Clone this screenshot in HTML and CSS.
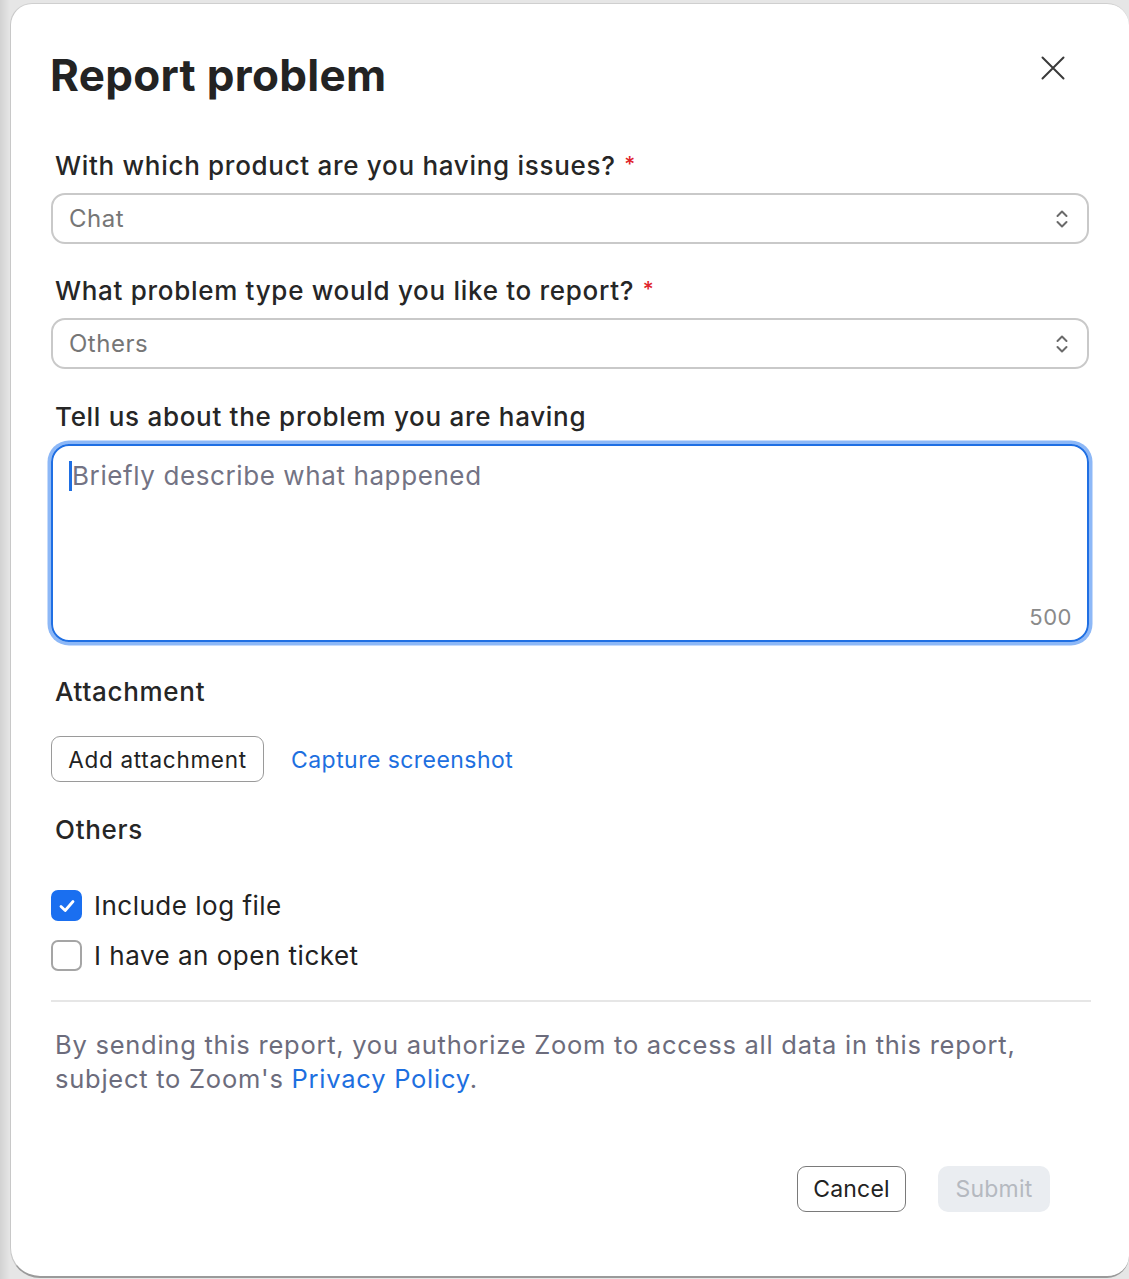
FILE: index.html
```html
<!DOCTYPE html>
<html>
<head>
<meta charset="utf-8">
<link rel="stylesheet" href="styles.css">
</head>
<body>
<div class="backdrop">
  <div class="dialog">
    <div class="header">
      <h1 class="title">Report problem</h1>
      <button class="close" aria-label="Close">
        <svg width="24" height="24" viewBox="0 0 24 24"><path d="M1.5 1.5 L22.5 22.5 M22.5 1.5 L1.5 22.5" stroke="#3a3a3a" stroke-width="2" stroke-linecap="round"/></svg>
      </button>
    </div>

    <div class="field">
      <div class="label">With which product are you having issues? <span class="req">*</span></div>
      <div class="select">
        <span class="select-value">Chat</span>
        <svg class="chev" width="14" height="24" viewBox="0 0 14 24"><path d="M2.5 9 L7 4.5 L11.5 9 M2.5 15 L7 19.5 L11.5 15" fill="none" stroke="#6a6a6a" stroke-width="2" stroke-linecap="round" stroke-linejoin="round"/></svg>
      </div>
    </div>

    <div class="field">
      <div class="label">What problem type would you like to report? <span class="req">*</span></div>
      <div class="select">
        <span class="select-value">Others</span>
        <svg class="chev" width="14" height="24" viewBox="0 0 14 24"><path d="M2.5 9 L7 4.5 L11.5 9 M2.5 15 L7 19.5 L11.5 15" fill="none" stroke="#6a6a6a" stroke-width="2" stroke-linecap="round" stroke-linejoin="round"/></svg>
      </div>
    </div>

    <div class="field">
      <div class="label label-ta">Tell us about the problem you are having</div>
      <div class="textarea">
        <div class="placeholder"><span class="caret"></span>Briefly describe what happened</div>
        <div class="counter">500</div>
      </div>
    </div>

    <div class="section">
      <div class="label">Attachment</div>
      <div class="attach-row">
        <button class="btn-outline attach">Add attachment</button>
        <a class="link capture">Capture screenshot</a>
      </div>
    </div>

    <div class="section others">
      <div class="label">Others</div>
      <div class="checks">
        <label class="check">
          <span class="box checked">
            <svg width="20" height="20" viewBox="0 0 20 20"><path d="M4 10.5 L8.2 14.5 L16 5.5" fill="none" stroke="#fff" stroke-width="2.8" stroke-linecap="round" stroke-linejoin="round"/></svg>
          </span>
          <span class="check-text">Include log file</span>
        </label>
        <label class="check">
          <span class="box"></span>
          <span class="check-text">I have an open ticket</span>
        </label>
      </div>
    </div>

    <div class="divider"></div>

    <p class="notice">By sending this report, you authorize Zoom to access all data in this report,<br>subject to Zoom's <a class="link">Privacy Policy</a>.</p>

    <div class="footer">
      <button class="btn-outline cancel">Cancel</button>
      <button class="btn-disabled">Submit</button>
    </div>
  </div>
</div>
</body>
</html>
```

FILE: styles.css
```css
* { box-sizing: border-box; }
html, body { margin: 0; padding: 0; }
body {
  width: 1129px;
  height: 1279px;
  overflow: hidden;
  font-family: Inter, "Liberation Sans", Arial, sans-serif;
  background: linear-gradient(to right, #d2d2d2 0px, #e6e6e6 10px, #e6e6e6 100%);
}
.backdrop {
  padding: 3px 0 0 10px;
  height: 1279px;
}
.dialog {
  width: 1119px;
  height: 1275px;
  background: #fff;
  border-radius: 22px 22px 22px 30px;
  border-top: 1px solid #cfcfcf;
  border-left: 1px solid #c8c8c8;
  border-bottom: 2px solid #9a9a9a;
  padding: 0 40px;
  display: flex;
  flex-direction: column;
}
.header {
  display: flex;
  justify-content: space-between;
  align-items: flex-start;
  height: 141px;
  flex: none;
}
.title {
  margin: 43px 0 0 -1px;
  font-size: 44px;
  line-height: 56px;
  font-weight: 700;
  color: #232323;
  letter-spacing: 0.3px;
}
.close {
  margin: 52px 24px 0 0;
  padding: 0;
  border: 0;
  background: none;
  width: 24px;
  height: 24px;
}
.field, .section { display: flex; flex-direction: column; flex: none; }
.label {
  font-size: 26px;
  font-weight: 500;
  color: #262626;
  padding-left: 4px;
  height: 40px;
  line-height: 40px;
  letter-spacing: 0.7px;
}
.label-ta { margin-top: 2px; }
.req { color: #e0242b; font-size: 21px; vertical-align: 3px; margin-left: 1px; }
.select {
  margin-top: 8px;
  height: 51px;
  width: 1038px;
  border: 2px solid #c9c9c9;
  border-radius: 14px;
  display: flex;
  align-items: center;
  justify-content: space-between;
  padding: 0 18px 0 16px;
  margin-bottom: 26px;
}
.select-value { font-size: 24px; color: #767676; letter-spacing: 0.5px; }
.textarea {
  margin-top: 7px;
  width: 1038px;
  height: 198px;
  border: 2px solid #1f6fe3;
  box-shadow: 0 0 0 3.5px #8db8f7;
  border-radius: 18px;
  padding: 14px 15px 10px 16px;
  display: flex;
  flex-direction: column;
  justify-content: space-between;
  margin-bottom: 30px;
}
.placeholder {
  font-size: 26px;
  color: #737384;
  display: flex;
  align-items: center;
  letter-spacing: 0.6px;
}
.caret {
  display: inline-block;
  width: 3px;
  height: 30px;
  background: #1f6fe3;
  margin-right: 0;
}
.counter { align-self: flex-end; font-size: 22px; color: #8a8a8a; letter-spacing: 0.5px; }
.attach-row {
  display: flex;
  align-items: center;
  gap: 27px;
  margin-top: 24px;
  margin-bottom: 28px;
}
.btn-outline {
  font-family: Inter, "Liberation Sans", Arial, sans-serif;
  background: #fff;
  border: 1.5px solid #9a9a9a;
  border-radius: 9px;
  color: #222;
  font-size: 22px;
  padding: 0;
}
.attach { width: 213px; height: 46px; font-size: 22.5px; letter-spacing: 0.7px; }
.link { color: #1d6fe0; text-decoration: none; }
.capture { font-size: 23px; margin-top: 2px; letter-spacing: 0.45px; }
.checks {
  display: flex;
  flex-direction: column;
  gap: 19px;
  margin-top: 40px;
}
.check { display: flex; align-items: center; gap: 12px; height: 31px; }
.box {
  width: 31px;
  height: 31px;
  border-radius: 7px;
  border: 2px solid #a5a5a5;
  background: #fff;
  display: flex;
  align-items: center;
  justify-content: center;
}
.box.checked { background: #1a6ff0; border-color: #1a6ff0; }
.check-text { font-size: 26px; color: #222; letter-spacing: 0.5px; }
.divider {
  margin-top: 29px;
  height: 2px;
  width: 1040px;
  background: #e6e6e6;
  flex: none;
}
.notice {
  margin: 26px 0 0 4px;
  font-size: 25.5px;
  line-height: 34px;
  color: #6c6c7c;
  white-space: nowrap;
  letter-spacing: 0.75px;
}
.footer {
  display: flex;
  justify-content: flex-end;
  gap: 32px;
  margin-top: 70px;
  padding-right: 39px;
}
.cancel { width: 109px; height: 46px; font-size: 23px; border-color: #7a7a7a; letter-spacing: 0.2px; }
.btn-disabled {
  width: 112px;
  height: 46px;
  border: 0;
  border-radius: 10px;
  background: #eaedf1;
  color: #b5b9c0;
  font-family: Inter, "Liberation Sans", Arial, sans-serif;
  font-size: 23px;
  letter-spacing: 0.2px;
}
```
